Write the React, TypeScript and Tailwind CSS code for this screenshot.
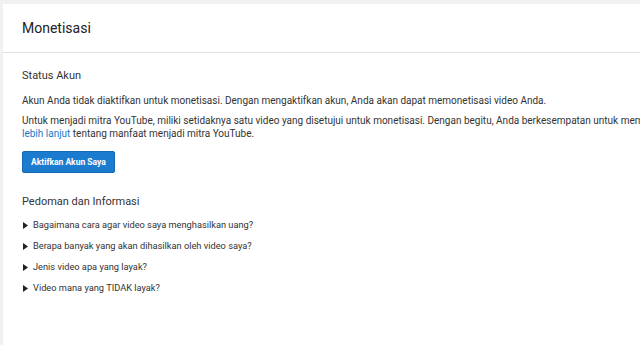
import React from 'react';

const faqs = [
  'Bagaimana cara agar video saya menghasilkan uang?',
  'Berapa banyak yang akan dihasilkan oleh video saya?',
  'Jenis video apa yang layak?',
  'Video mana yang TIDAK layak?',
];

export default function App() {
  return (
    <div className="h-[345px] w-[640px] overflow-hidden bg-[#f1f1f1] pl-[3px] pt-[4px] font-['Roboto',sans-serif] text-[#333]">
      <div className="h-full w-[720px] bg-white">
        <div className="flex h-[49px] items-center border-b border-[#e2e2e2] px-[19px] pt-[1px]">
          <h1 className="text-[14px] text-[#222]">Monetisasi</h1>
        </div>

        <div className="px-[19px] pt-[15px]">
          <h2 className="text-[11px] leading-[16px] text-[#333]">Status Akun</h2>
          <p className="mt-[10px] text-[10px] leading-[14px]">
            Akun Anda tidak diaktifkan untuk monetisasi. Dengan mengaktifkan akun, Anda akan dapat memonetisasi video Anda.
          </p>
          <p className="mt-[6px] w-[672px] text-[10px] leading-[13px]">
            Untuk menjadi mitra YouTube, miliki setidaknya satu video yang disetujui untuk monetisasi. Dengan begitu, Anda berkesempatan untuk mempelajari{' '}
            <a className="text-[#167ac6]">lebih lanjut</a> tentang manfaat menjadi mitra YouTube.
          </p>
          <button className="mt-[11px] h-[22px] rounded-[2px] border border-[#1268b3] bg-[#1b7bcf] px-[8px] text-[8.5px] font-bold text-white">
            Aktifkan Akun Saya
          </button>

          <h2 className="mt-[21px] text-[11px] leading-[16px] text-[#333]">Pedoman dan Informasi</h2>
          <ul className="mt-[8px] flex flex-col gap-[7px]">
            {faqs.map((q) => (
              <li key={q} className="flex items-center gap-[5px] text-[9.25px] leading-[14px]">
                <svg width="5" height="7" viewBox="0 0 5 7" className="ml-[1px]">
                  <path d="M0 0 L5 3.5 L0 7 Z" fill="#222" />
                </svg>
                <span>{q}</span>
              </li>
            ))}
          </ul>
        </div>
      </div>
    </div>
  );
}
